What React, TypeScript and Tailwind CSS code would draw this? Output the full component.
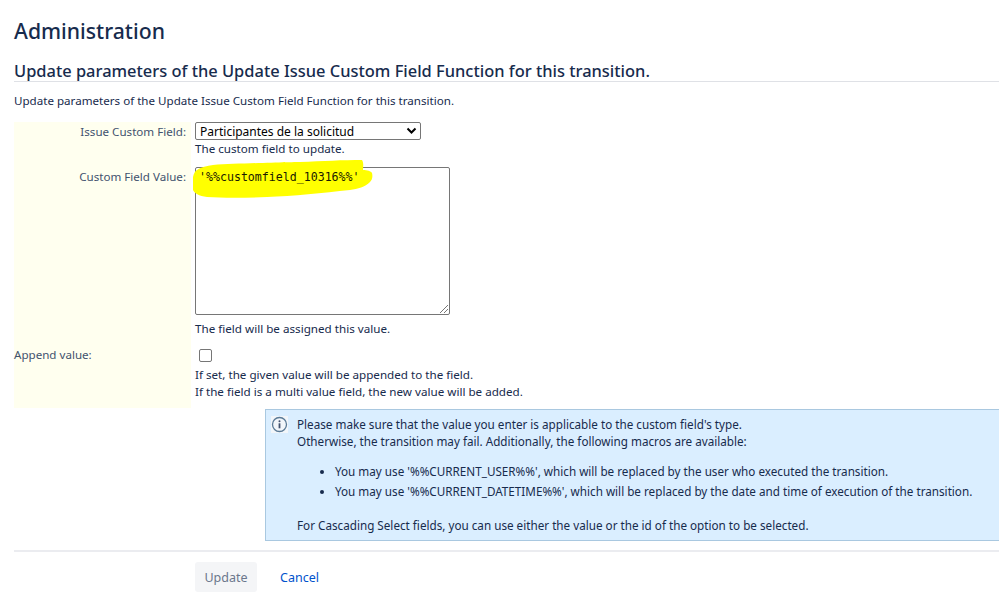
export default function App() {
  return (
    <div className="w-[999px] h-[601px] overflow-hidden bg-white text-[#172b4d] text-[11.6px] leading-[17px] font-['Noto_Sans',sans-serif] pl-[14px]">
      <h1 className="text-[21.2px] leading-[30px] font-medium pt-[16px] h-[46px]">Administration</h1>
      <h2 className="mt-[14px] pt-[1px] text-[16.45px] leading-[20px] font-medium border-b border-[#dfe1e6] h-[22px] whitespace-nowrap">
        Update parameters of the Update Issue Custom Field Function for this transition.
      </h2>
      <p className="mt-[10px] h-[17px]">Update parameters of the Update Issue Custom Field Function for this transition.</p>
      <div className="mt-[13px] flex h-[286px]">
        <div className="w-[177px] shrink-0 bg-[#ffffef] text-[#42526e] flex flex-col">
          <div className="text-right pr-[5px] pt-[1px] h-[46px]">Issue Custom Field:</div>
          <div className="text-right pr-[5px] h-[178px]">Custom Field Value:</div>
          <div>Append value:</div>
        </div>
        <div className="relative pl-[4px] flex flex-col items-start text-[11.65px]">
          <div className="w-[226px] h-[18px] border border-[#767676] rounded-[2px] bg-white flex items-center justify-between pl-[4px] pr-[3px] text-black text-[12px]">
            <span>Participantes de la solicitud</span>
            <svg width="11" height="8" viewBox="0 0 11 8" fill="none"><path d="M1.5 1.5 5.5 5.5 9.5 1.5" stroke="#000" strokeWidth="2" /></svg>
          </div>
          <div className="h-[18px]">The custom field to update.</div>
          <div className="relative mt-[9px] w-[255px] h-[148px] border border-[#767676] rounded-[2px] bg-white">
            <svg className="absolute right-[0px] bottom-[0px]" width="11" height="11" viewBox="0 0 11 11" fill="none"><path d="M10 2 2 10M10 6 6 10" stroke="#777" strokeWidth="1" /></svg>
          </div>
          <div className="mt-[5px] h-[18px]">The field will be assigned this value.</div>
          <input type="checkbox" className="mt-[11px] ml-[4px] w-[13px] h-[13px] appearance-none border border-[#767676] rounded-[2px] bg-white block" />
          <div className="mt-[4px]">If set, the given value will be appended to the field.</div>
          <div>If the field is a multi value field, the new value will be added.</div>
          <svg className="absolute left-[2px] top-[38px] pointer-events-none" width="180" height="38" viewBox="0 0 180 38" fill="none">
            <path d="M0 17C1 13 2 11 4 10 8 7 14 6 20 5 50 3 107 2 107 2 130 1 150 0 169 0 171 3 170 7 170 10 174 10 178 11 179 13 180 17 179 20 177 22 172 27 165 29 157 30 130 33 100 36 74 37 50 38 30 38 14 37 6 36 1 33 0 30Z" fill="#ffff00" />
          </svg>
          <span className="absolute left-[8px] top-[47px] font-['DejaVu_Sans_Mono',monospace] text-[11.6px] leading-[17px] text-[#1a1a00] whitespace-nowrap">'%%customfield_10316%%'</span>
        </div>
      </div>
      <div className="mt-[1px] ml-[251px] w-[740px] h-[132px] border border-[#a9c8e0] bg-[#daeeff] text-[#172b4d] text-[11.7px] flex pt-[6px] pl-[5px] overflow-hidden">
        <svg className="shrink-0" width="17" height="17" viewBox="0 0 17 17" fill="none">
          <rect width="17" height="17" fill="#f2f6fa" />
          <circle cx="8.5" cy="8.5" r="7" stroke="#5a7a96" strokeWidth="1.3" />
          <circle cx="8.5" cy="5.3" r="1" fill="#42526e" />
          <rect x="7.6" y="7.3" width="1.8" height="5" fill="#42526e" />
        </svg>
        <div className="ml-[9px] whitespace-nowrap">
          <p>Please make sure that the value you enter is applicable to the custom field's type.</p>
          <p>Otherwise, the transition may fail. Additionally, the following macros are available:</p>
          <ul className="list-disc pl-[38px] mt-[13px] flex flex-col gap-[3px]">
            <li>You may use '%%CURRENT_USER%%', which will be replaced by the user who executed the transition.</li>
            <li>You may use '%%CURRENT_DATETIME%%', which will be replaced by the date and time of execution of the transition.</li>
          </ul>
          <p className="mt-[17px]">For Cascading Select fields, you can use either the value or the id of the option to be selected.</p>
        </div>
      </div>
      <div className="mt-[9px] border-t-2 border-[#ebecf0] pt-[10px] flex items-center">
        <button className="ml-[181px] w-[62px] h-[30px] rounded-[3px] bg-[#f4f5f7] text-[#6b778c] text-[12.5px]">Update</button>
        <a className="ml-[23px] text-[#0052cc] text-[12.5px]">Cancel</a>
      </div>
    </div>
  );
}
